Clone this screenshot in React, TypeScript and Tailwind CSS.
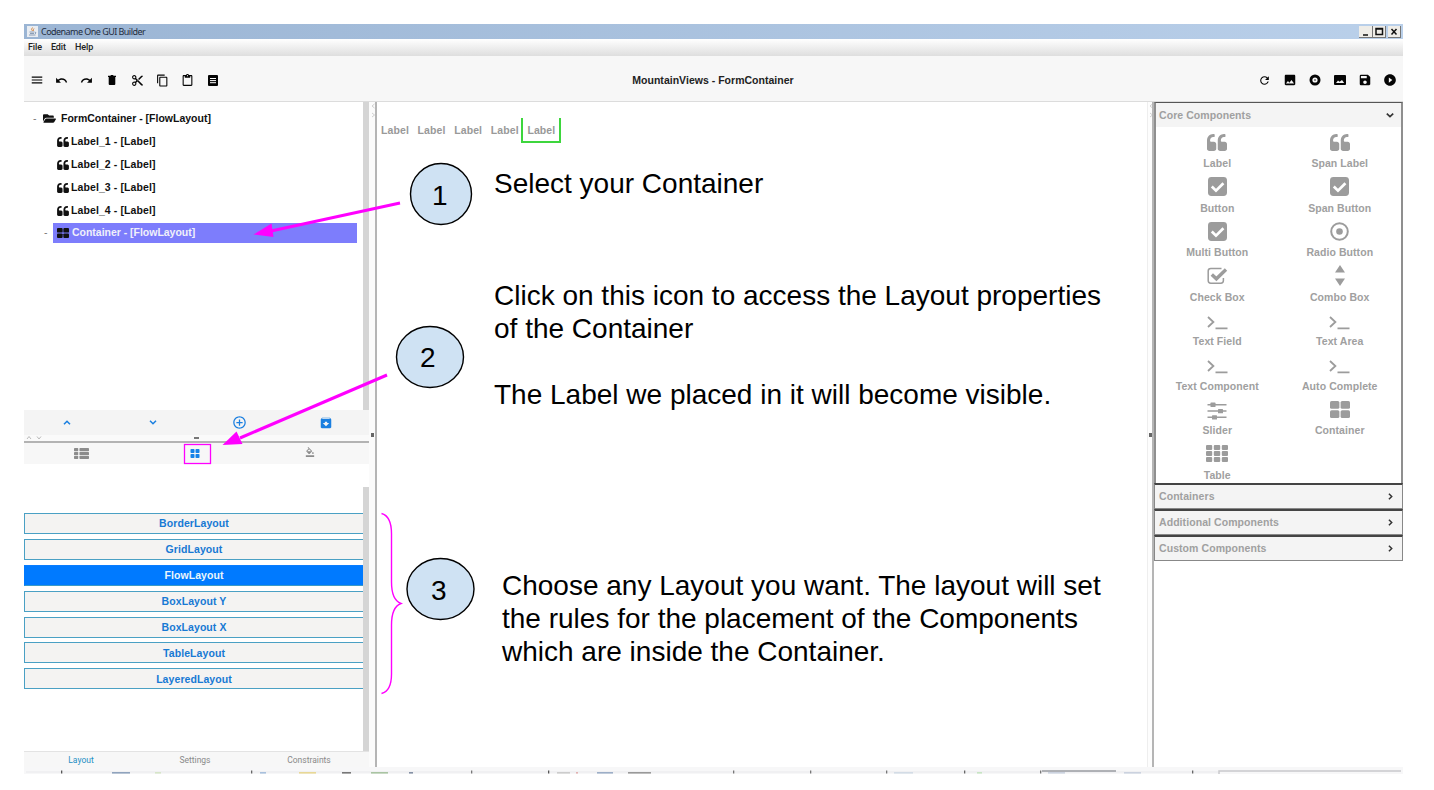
import React from "react";
import {
  MdAddCircleOutline, MdArchive, MdContentCopy, MdContentCut, MdContentPaste,
  MdFormatColorFill, MdImage, MdMenu, MdPlayCircleFilled,
  MdRedo, MdRefresh, MdSave, MdUndo,
} from "react-icons/md";
import { FaFolderOpen } from "react-icons/fa";

const GridIcon = ({ className = "", rows = 3, wide = false }: { className?: string; rows?: number; wide?: boolean }) => (
  <svg viewBox="0 0 22 17" className={className} fill="currentColor" preserveAspectRatio="none">
    {Array.from({ length: rows }, (_, r) => (
      <g key={r}>
        <rect x="0" y={r * 6} width="6.2" height="5" rx="1" />
        {wide ? (
          <rect x="8" y={r * 6} width="14" height="5" rx="1" />
        ) : (
          <>
            <rect x="7.8" y={r * 6} width="6.4" height="5" rx="1" />
            <rect x="15.8" y={r * 6} width="6.2" height="5" rx="1" />
          </>
        )}
      </g>
    ))}
  </svg>
);

const ArticleIcon = () => (
  <svg viewBox="0 0 10 11" className="h-[11px] w-[10px]">
    <rect width="10" height="11" rx="1" fill="#050505" />
    <path d="M2 3.500h6M2 5.600h6M2 7.700h6" stroke="#fff" strokeWidth="1" />
  </svg>
);

const WideImage = () => (
  <svg viewBox="0 0 12 10" className="h-[10px] w-[12px]">
    <rect width="12" height="10" rx="1" fill="#050505" />
    <path d="M2 8l2-2.400 1.600 1.200L8 5 10.200 8z" fill="#f7f7f7" />
  </svg>
);

const RingIcon = () => (
  <svg viewBox="0 0 12 12" className="h-[12px] w-[12px]">
    <circle cx="6" cy="6" r="5.500" fill="#050505" />
    <circle cx="6" cy="6" r="2.600" fill="#f7f7f7" />
    <circle cx="6" cy="6" r="1.100" fill="#777" />
  </svg>
);

const Quote = ({ className }: { className: string }) => (
  <svg viewBox="0 128 1664 1408" className={className} fill="currentColor">
    {[0, 896].map((x) => (
      <path
        key={x}
        transform={`translate(${x} 0)`}
        d="M768 960v384q0 80-56 136t-136 56H192q-80 0-136-56T0 1344V640q0-104 40.500-198.500T150 278 313.500 168.500 512 128h64q26 0 45 19t19 45v128q0 26-19 45t-45 19h-64q-106 0-181 75t-75 181v32q0 40 28 68t68 28h224q80 0 136 56t56 136z"
      />
    ))}
  </svg>
);

const QuoteIcon = () => <Quote className="h-[17px] w-[20px]" />;
const CheckedIcon = () => (
  <svg viewBox="0 0 19 19" className="h-[19px] w-[19px]">
    <rect width="19" height="19" rx="3.400" fill="currentColor" />
    <path d="M3.800 9.500l4.200 4.200 7.400-7.400" fill="none" stroke="#fff" strokeWidth="2.700" />
  </svg>
);
const RadioIcon = () => (
  <svg viewBox="0 0 19 19" className="h-[19px] w-[19px]">
    <circle cx="9.500" cy="9.500" r="8.300" fill="none" stroke="currentColor" strokeWidth="2" />
    <circle cx="9.500" cy="9.500" r="3.300" fill="currentColor" />
  </svg>
);
const CheckBoxIcon = () => (
  <svg viewBox="0 0 21 18" className="h-[18px] w-[21px]" fill="none" stroke="currentColor">
    <path d="M14.500 1.600H3.800Q1.200 1.600 1.200 4v9.600q0 2.600 2.600 2.600h10q2.600 0 2.600-2.600V11" strokeWidth="1.500" />
    <path d="M4.800 7.400l4.600 4.400L19 2.600" strokeWidth="3.400" />
  </svg>
);
const ComboIcon = () => (
  <svg viewBox="0 0 10 21" className="h-[21px] w-[10px]" fill="currentColor">
    <path d="M5 0l5 7.500H0zM5 21l5-7.500H0z" />
  </svg>
);
const PromptIcon = () => (
  <svg viewBox="0 0 21 14" className="mt-[5px] h-[14px] w-[21px]" fill="none" stroke="currentColor" strokeWidth="1.800">
    <path d="M1 1l5.400 5L1 11M8.500 12.300h12" />
  </svg>
);
const SliderIcon = () => (
  <svg viewBox="0 0 20 18" className="mt-[4px] h-[18px] w-[20px]" fill="currentColor">
    <path d="M.5 2h19v1.500H.5zM.5 8.300h19v1.500H.5zM.5 14.600h19v1.500H.5z" />
    <rect x="3.500" y=".6" width="5" height="4.400" rx=".6" />
    <rect x="11" y="6.900" width="5" height="4.400" rx=".6" />
    <rect x="5" y="13.200" width="5" height="4.400" rx=".6" />
  </svg>
);
const Blocks = ({ className }: { className: string }) => (
  <svg viewBox="0 0 20 17" className={className} fill="currentColor" preserveAspectRatio="none">
    <rect width="9.400" height="7.800" rx="1.600" />
    <rect x="10.600" width="9.400" height="7.800" rx="1.600" />
    <rect y="9.200" width="9.400" height="7.800" rx="1.600" />
    <rect x="10.600" y="9.200" width="9.400" height="7.800" rx="1.600" />
  </svg>
);
const ContainerIcon = () => <Blocks className="h-[17px] w-[20px]" />;
const TableIcon = () => <GridIcon className="h-[17px] w-[22px]" />;

const palette: [string, React.FC][] = [
  ["Label", QuoteIcon], ["Span Label", QuoteIcon],
  ["Button", CheckedIcon], ["Span Button", CheckedIcon],
  ["Multi Button", CheckedIcon], ["Radio Button", RadioIcon],
  ["Check Box", CheckBoxIcon], ["Combo Box", ComboIcon],
  ["Text Field", PromptIcon], ["Text Area", PromptIcon],
  ["Text Component", PromptIcon], ["Auto Complete", PromptIcon],
  ["Slider", SliderIcon], ["Container", ContainerIcon],
  ["Table", TableIcon],
];

const layouts = ["BorderLayout", "GridLayout", "FlowLayout", "BoxLayout Y", "BoxLayout X", "TableLayout", "LayeredLayout"];

const Cell = ({ children }: { children: React.ReactNode }) => (
  <div className="flex h-full w-[25.15px] items-center justify-center">{children}</div>
);

const TitleBar = () => (
  <div className="flex h-[15px] items-center bg-linear-to-r from-[#9bb5d4] to-[#bad0ea] pr-[2px] pl-[3px]">
    <svg viewBox="0 0 11 11" className="h-[11px] w-[11px]">
      <rect width="11" height="11" fill="#e9edf2" />
      <path d="M5.500 1.500q-2 2 0 3.500M7 2.500Q5.500 4 6.500 5" stroke="#d58b4a" fill="none" />
      <path d="M2.500 6h5M3 7.500h4M2 9h6.500M8 6q2 .5 0 2" stroke="#7289a6" strokeWidth=".8" fill="none" />
    </svg>
    <span className="ml-[3px] font-['Noto_Sans'] text-[9px] leading-none tracking-[-0.54px] text-[#1f2c3d]">Codename One GUI Builder</span>
    <div className="ml-auto flex h-[12px]">
      {["M4 9h5", "M3 2.500h6.500v6H3zM3 3h6.500", "M3.500 3l5 5.500M8.500 3l-5 5.500"].map((d, i) => (
        <div key={d} className={i === 2 ? "ml-[2px] h-[12px] w-[13px] border-r border-b border-[#777] bg-[#efede8]" : "h-[12px] w-[13.5px] border-r border-b border-[#777] bg-[#efede8]"}>
          <svg viewBox="0 0 12 11" className="h-[11px] w-[12px]"><path d={d} fill="none" stroke="#111" strokeWidth="1.500" /></svg>
        </div>
      ))}
    </div>
  </div>
);

const Toolbar = () => (
  <div className="flex h-[46px] items-center justify-between border-b border-[#dcdcdc] bg-[#f7f7f7] text-[#050505]">
    <div className="flex h-full w-[250px] items-center pt-[3px]">
      <Cell><MdMenu className="h-[14px] w-[14px]" /></Cell>
      <Cell><MdUndo className="h-[13px] w-[13px] stroke-current" /></Cell>
      <Cell><MdRedo className="h-[13px] w-[13px] stroke-current" /></Cell>
      <Cell><svg viewBox="0 0 8 10" className="h-[10px] w-[8px]"><path d="M0 .7h2.400L3 0h2l.6.7H8V2H0zM.7 2h6.600V9q0 1-1 1H1.700q-1 0-1-1z" fill="#050505" /></svg></Cell>
      <Cell><MdContentCut className="h-[13px] w-[13px]" /></Cell>
      <Cell><MdContentCopy className="h-[13px] w-[13px]" /></Cell>
      <Cell><MdContentPaste className="h-[13px] w-[13px]" /></Cell>
      <Cell><ArticleIcon /></Cell>
    </div>
    <div className="pt-[3px] pr-[1px] text-[10.5px] leading-none font-bold tracking-[0.02px] text-[#222]">MountainViews - FormContainer</div>
    <div className="flex h-full w-[250px] items-center justify-end pt-[3px]">
      <Cell><MdRefresh className="h-[13px] w-[13px]" /></Cell>
      <Cell><MdImage className="h-[14px] w-[14px]" /></Cell>
      <Cell><RingIcon /></Cell>
      <Cell><WideImage /></Cell>
      <Cell><MdSave className="h-[14px] w-[14px]" /></Cell>
      <Cell><MdPlayCircleFilled className="h-[14px] w-[14px]" /></Cell>
    </div>
  </div>
);

const Tree = () => (
  <div className="flex h-[308px] bg-white">
    <div className="flex-1 pt-[5px] text-[10.5px] leading-none font-bold text-[#111]">
      <div className="flex h-[23px] items-center">
        <span className="w-[19px] pl-[9px] font-normal text-[#777]">-</span>
        <FaFolderOpen className="h-[13px] w-[13px]" />
        <span className="ml-[5px]">FormContainer - [FlowLayout]</span>
      </div>
      {["Label_1", "Label_2", "Label_3", "Label_4"].map((name) => (
        <div key={name} className="flex h-[23px] items-center pl-[33px]">
          <Quote className="h-[10px] w-[12px]" />
          <span className="ml-[2px] tracking-[0.1px]">{name} - [Label]</span>
        </div>
      ))}
      <div className="-mt-px flex h-[23px] items-center">
        <span className="w-[29px] pl-[20px] font-normal text-[#777]">-</span>
        <div className="mr-[6px] flex h-[20px] flex-1 items-center bg-[#7d7dfc] pl-[4px]">
          <Blocks className="h-[10px] w-[12px]" />
          <span className="ml-[3px] tracking-[-0.02px] text-[#f0f0fa]">Container - [FlowLayout]</span>
        </div>
      </div>
    </div>
    <div className="w-[6px] bg-[#d5d5d5]" />
  </div>
);

const LeftPanel = () => (
  <div className="flex w-[345px] flex-col">
    <Tree />
    <div className="grid h-[25px] grid-cols-4 place-items-center bg-[#f4f4f4] text-[#1a7fe0]">
      <svg viewBox="0 0 8 5" className="h-[5px] w-[8px]"><path d="M1 4.300L4 1.300 7 4.300" fill="none" stroke="currentColor" strokeWidth="1.500" /></svg>
      <svg viewBox="0 0 8 5" className="h-[5px] w-[8px]"><path d="M1 .7L4 3.700 7 .7" fill="none" stroke="currentColor" strokeWidth="1.500" /></svg>
      <MdAddCircleOutline className="h-[15px] w-[15px]" />
      <MdArchive className="h-[14px] w-[14px]" />
    </div>
    <div className="flex h-[8px] justify-between border-b-2 border-[#b3b3b3] bg-[#fafafa] pl-[2px]">
      <svg viewBox="0 0 16 5" className="h-[5px] w-[16px]"><path d="M1 4l2-2.500L5 4M11 1.500L13 4l2-2.500" fill="none" stroke="#aaa" strokeWidth=".8" /></svg>
      <div className="mt-[2px] mr-[7px] h-[2px] w-[5px] bg-[#777]" />
      <div className="w-[12px]" />
    </div>
    <div className="grid h-[21px] grid-cols-3 place-items-center bg-[#f7f7f7]">
      <GridIcon wide className="h-[11px] w-[15px] text-[#8c8c8c]" />
      <svg viewBox="0 0 10 9" className="-ml-[3px] h-[9px] w-[10px]" fill="#1783e8">
        <rect x=".5" width="4" height="4" rx=".8" /><rect x="5.500" width="4" height="4" rx=".8" />
        <rect x=".5" y="5" width="4" height="4" rx=".8" /><rect x="5.500" y="5" width="4" height="4" rx=".8" />
      </svg>
      <MdFormatColorFill className="-ml-[3px] -mt-[3px] h-[10px] w-[10px] text-[#8c8c8c]" />
    </div>
    <div className="h-[23px]" />
    <div className="flex h-[264px]">
      <div className="flex flex-1 flex-col gap-[4.9px] pt-[26px]">
        {layouts.map((name) => (
          <div
            key={name}
            className={
              name === "FlowLayout"
                ? "flex h-[21px] items-center justify-center border border-r-0 border-[#3b9ac6] border-t-[#0a7dff] border-l-[#007aff] bg-[#007aff] text-[10.5px] leading-none font-bold tracking-[0.08px] text-[#eaf6fb]"
                : "flex h-[21px] items-center justify-center border border-r-0 border-[#4aa0c4] bg-[#f4f3f2] text-[10.5px] leading-none font-bold tracking-[0.08px] text-[#1779d4]"
            }
          >
            {name}
          </div>
        ))}
      </div>
      <div className="w-[6px] bg-[#d5d5d5]" />
    </div>
    <div className="grid flex-1 grid-cols-3 place-items-center border-t border-[#e3e3e3] bg-[#f7f7f7] pt-[2px] pr-[3px] font-[Roboto] text-[8.5px] leading-none text-[#8a8a8a]">
      <span className="text-[#258fc4]">Layout</span>
      <span>Settings</span>
      <span>Constraints</span>
    </div>
  </div>
);

const Splitter = ({ className }: { className: string }) => (
  <div className={className}>
    <svg viewBox="0 0 5 20" className="h-[20px] w-[5px]"><path d="M4.500 2L2 4l2.500 2M2 11l2.500 2L2 15" fill="none" stroke="#bbb" strokeWidth=".7" /></svg>
    <div className="mt-[311px] h-[4px] w-[3px] bg-[#666]" />
  </div>
);

const Canvas = () => (
  <div className="flex-1 bg-white pt-[16px] pl-[4px]">
    <div className="flex h-[25px] text-[10.5px] leading-[25px] font-bold tracking-[0.1px] text-[#999]">
      {[1, 2, 3, 4].map((n) => <span key={n} className="w-[36.6px]">Label</span>)}
      <span className="-ml-[6px] w-[40px] border-x-2 border-b-2 border-[#3dd63d] pl-[4px]">Label</span>
    </div>
  </div>
);

const Palette = () => (
  <div className="w-[249px] text-[10.5px] leading-none font-bold tracking-[0.07px] text-[#a0a0a0]">
    <div className="border-x-2 border-t border-[#8f8f8f] border-t-[#555]">
      <div className="flex h-[24px] items-center justify-between bg-[#f4f4f4] pr-[7px] pl-[3px]">
        <span>Core Components</span>
        <svg viewBox="0 0 8 5" className="h-[5px] w-[8px]"><path d="M.8.700L4 3.700 7.200.7" fill="none" stroke="#333" strokeWidth="1.700" /></svg>
      </div>
      <div className="grid h-[356px] grid-cols-2 grid-rows-8">
        {palette.map(([name, Icon]) => (
          <div key={name} className="flex flex-col items-center">
            <div className="flex h-[30px] items-center text-[#9c9c9c]"><Icon /></div>
            <span className="mt-px">{name}</span>
          </div>
        ))}
      </div>
    </div>
    {["Containers", "Additional Components", "Custom Components"].map((name) => (
      <div key={name} className="flex h-[26px] items-center justify-between border border-t-2 border-[#888] border-t-[#444] bg-[#f4f4f4] pr-[9px] pl-[4px]">
        <span>{name}</span>
        <svg viewBox="0 0 5 8" className="h-[7px] w-[5px]"><path d="M.700.8L3.900 4 .7 7.200" fill="none" stroke="#333" strokeWidth="1.700" /></svg>
      </div>
    ))}
  </div>
);

const taskMarks: [number, number, string][] = [
  [37, 1, "#555"], [88, 18, "#8fa3bd"], [131, 6, "#d6e5c8"], [227, 1, "#666"], [236, 6, "#a8c0dd"], [275, 17, "#e8d896"],
  [318, 9, "#777"], [347, 17, "#a9c4a2"], [385, 4, "#8490a5"], [447, 1, "#777"], [524, 1, "#555"], [533, 13, "#ccc"],
  [552, 2, "#e2b1b1"], [573, 16, "#9caec7"], [604, 23, "#999"], [709, 1, "#777"], [786, 1, "#777"], [862, 1, "#777"],
  [870, 19, "#d3dce6"], [940, 1, "#666"], [953, 5, "#c7e5c3"], [1016, 1, "#777"], [1024, 17, "#cbd2df"], [1100, 17, "#cbd2df"], [1168, 1, "#666"],
];

const TaskStrip = () => (
  <div className="h-[7px] bg-[#f7f7f8]">
    <svg viewBox="0 0 1379 7" className="h-[7px] w-[1379px]">
      <path d="M2 5h1192" stroke="#e9e9ec" />
      {taskMarks.map(([x, w, c]) => <rect key={x} x={x} y={w === 1 ? 3.500 : 5} width={w === 1 ? 1.300 : w} height={w === 1 ? 3 : 1.600} fill={c} />)}
      <path d="M1018 4h74" stroke="#999ba0" strokeWidth="1.500" />
      <path d="M1195 7V4h182" fill="none" stroke="#c9c9cb" strokeWidth="1.500" />
    </svg>
  </div>
);

const Annotations = () => (
  <div className="pointer-events-none absolute inset-0 text-[28px] leading-[33px] text-black">
    <svg viewBox="0 0 1434 790" className="absolute inset-0 h-[790px] w-[1434px]" fill="none">
      <path d="M400 203L271 231" stroke="#f0f" strokeWidth="3" />
      <path d="M253.500 234.500L271.500 223.500 273.500 237z" fill="#f0f" />
      <path d="M387 375L240 438" stroke="#f0f" strokeWidth="3" />
      <path d="M222.500 445L236.500 431.500 242.500 444z" fill="#f0f" />
      <rect x="184.500" y="444.500" width="26" height="19" stroke="#f0f" strokeWidth="1.300" />
      <path d="M381.500 513.500Q391.500 516 391.500 534V582Q391.500 600 401 603.500Q391.500 607 391.500 625V674Q391.500 691 381.500 693.500" stroke="#f0f" strokeWidth="1.400" />
      <g fill="#cfe2f3" stroke="#000" strokeWidth="1.400">
        <ellipse cx="441" cy="194" rx="30.500" ry="30.500" />
        <ellipse cx="430" cy="357" rx="33.500" ry="30.500" />
        <ellipse cx="440.500" cy="589" rx="33.500" ry="30.500" />
      </g>
    </svg>
    <span className="absolute top-[179px] left-[432px]">1</span>
    <span className="absolute top-[341px] left-[420px]">2</span>
    <span className="absolute top-[574px] left-[431px]">3</span>
    <p className="absolute top-[167px] left-[494px] whitespace-nowrap">Select your Container</p>
    <div className="absolute top-[279px] left-[494px] whitespace-nowrap">
      <p>Click on this icon to access the Layout properties<br />of the Container</p>
      <p className="mt-[33px]">The Label we placed in it will become visible.</p>
    </div>
    <p className="absolute top-[569px] left-[502px] whitespace-nowrap">
      Choose any Layout you want. The layout will set<br />the rules for the placement of the Components<br />which are inside the Container.
    </p>
  </div>
);

export default function App() {
  return (
    <div className="relative h-[790px] w-[1434px] overflow-hidden bg-white p-[24px] font-['Liberation_Sans',sans-serif]">
      <div className="flex h-[750px] w-[1379px] flex-col">
        <TitleBar />
        <div className="flex h-[17px] items-center gap-[9px] bg-linear-to-b from-white to-[#dedede] pl-[4px] font-[Roboto] text-[9px] leading-none font-medium tracking-[-0.1px] text-[#222]">
          <span>File</span><span>Edit</span><span>Help</span>
        </div>
        <Toolbar />
        <div className="flex h-[665px]">
          <LeftPanel />
          <Splitter className="flex w-[8px] flex-col items-center border-r-2 border-[#b5b5b5] bg-[#fbfbfb]" />
          <Canvas />
          <Splitter className="flex w-[7px] flex-col items-center border-r-2 border-l border-l-[#eee] border-r-[#b5b5b5] bg-[#fdfdfd]" />
          <Palette />
        </div>
        <TaskStrip />
      </div>
      <Annotations />
    </div>
  );
}
